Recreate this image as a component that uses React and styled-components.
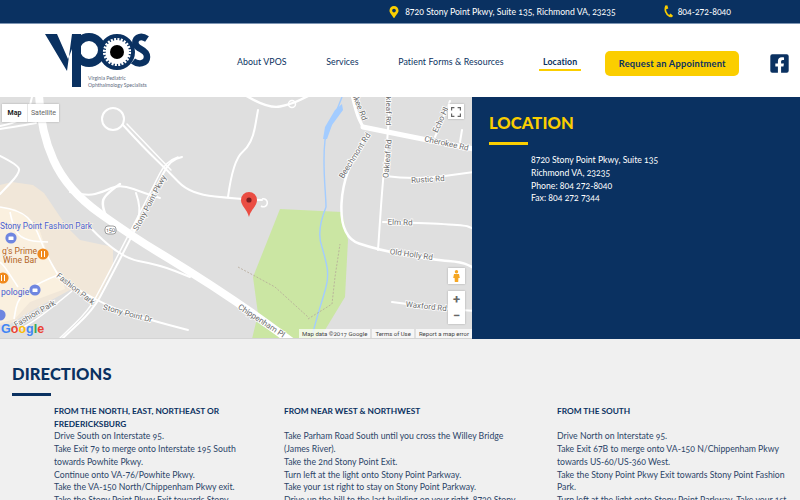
import React from "react";
import styled, { createGlobalStyle } from "styled-components";
import { FaFacebookSquare, FaMapMarkerAlt } from "react-icons/fa";

const NAVY = "#0a3161";
const YELLOW = "#fbce00";
const FONT = `Lato, "Open Sans", "Liberation Sans", sans-serif`;

const GlobalStyle = createGlobalStyle`
  html, body {
    height: 500px;
    margin: 0;
    overflow: hidden;
  }

  body {
    background: #f0f0f0;
    font-family: ${FONT};
    font-variant-numeric: oldstyle-nums;
  }
`;

const Page = styled.div`
  height: 500px;
  overflow: hidden;
  width: 800px;
`;

const TopBar = styled.div`
  align-items: center;
  background: ${NAVY};
  border-bottom: 1px solid #7d95b3;
  color: #fff;
  display: flex;
  font-size: 8.7px;
  height: 23px;
  justify-content: flex-end;
  padding-right: 69px;
`;

const TopItem = styled.span`
  align-items: center;
  display: flex;
  gap: ${(p) => p.$gap}px;
  margin-left: ${(p) => p.$offset || 0}px;
`;

const Header = styled.header`
  align-items: center;
  background: #fff;
  display: flex;
  height: 73px;
  padding-left: 44px;
`;

const LogoSvg = styled.svg`
  flex: none;
  height: 60px;
  margin-right: 85px;
  width: 108px;
`;

const HeaderActions = styled.div`
  align-items: center;
  display: flex;
  flex: none;
  margin-top: 6px;
`;

const Nav = styled.nav`
  align-items: center;
  display: flex;
  flex: none;
  gap: 39.5px;
`;

const NavLink = styled.a`
  border-bottom: 2px solid ${(p) => (p.$active ? YELLOW : "transparent")};
  color: ${NAVY};
  flex: none;
  font-size: 8.8px;
  font-weight: ${(p) => (p.$active ? 700 : 400)};
  letter-spacing: 0.08px;
  margin: ${(p) => (p.$active ? "0 -4px" : "0")};
  padding: 0 ${(p) => (p.$active ? "4px" : "0")} 2px;
  white-space: nowrap;
`;

const AppointmentButton = styled.button`
  background: ${YELLOW};
  border: 0;
  border-radius: 5px;
  color: ${NAVY};
  flex: none;
  font-family: ${FONT};
  font-size: 9.3px;
  font-weight: 700;
  height: 25px;
  letter-spacing: 0.2px;
  margin-left: 28px;
  padding: 0;
  width: 134px;
`;

const FacebookLink = styled.a`
  color: ${NAVY};
  display: flex;
  flex: none;
  font-size: 21px;
  margin-left: 30px;
`;

const Hero = styled.section`
  display: flex;
  height: 242px;
`;

const MapFrame = styled.div`
  background: #dfdfdf;
  border-bottom: 1px solid #d4d4d4;
  box-sizing: border-box;
  flex: none;
  height: 242px;
  overflow: hidden;
  position: relative;
  width: 472px;
`;

const MapTypes = styled.div`
  background: #fff;
  box-shadow: 0 0 2px rgba(0, 0, 0, 0.25);
  display: flex;
  left: 2px;
  position: absolute;
  top: 7px;
`;

const MapType = styled.span`
  align-items: center;
  border-left: ${(p) => (p.$active ? "0" : "1px solid #e6e6e6")};
  color: ${(p) => (p.$active ? "#222" : "#666")};
  display: flex;
  font-family: Roboto, sans-serif;
  font-size: 7px;
  font-weight: ${(p) => (p.$active ? 700 : 400)};
  height: 18px;
  justify-content: center;
  width: ${(p) => p.$width}px;
`;

const MapButton = styled.div`
  align-items: center;
  background: #fff;
  box-shadow: 0 0 2px rgba(0, 0, 0, 0.25);
  display: flex;
  height: ${(p) => p.$height}px;
  justify-content: center;
  left: 448px;
  position: absolute;
  top: ${(p) => p.$top}px;
  width: ${(p) => p.$width || 16}px;
`;

const ZoomControl = styled.div`
  background: #fff;
  box-shadow: 0 0 2px rgba(0, 0, 0, 0.25);
  display: grid;
  grid-template-rows: 1fr 1fr;
  height: 33px;
  left: 448px;
  position: absolute;
  top: 194px;
  width: 17px;
`;

const ZoomButton = styled.span`
  align-items: center;
  color: #666;
  display: flex;
  font-family: Roboto, sans-serif;
  font-size: 13px;
  font-weight: 700;
  justify-content: center;
  line-height: 1;
`;

const Attribution = styled.div`
  bottom: 0;
  color: #444;
  display: flex;
  font-family: Roboto, sans-serif;
  font-size: 6px;
  gap: 2px;
  height: 9px;
  position: absolute;
  right: 0;
`;

const AttributionItem = styled.span`
  background: rgba(255, 255, 255, 0.7);
  line-height: 9px;
  padding: 0 3px;
`;

const LocationPanel = styled.div`
  background: ${NAVY};
  color: #fff;
  flex: 1;
  padding: 15px 17px;
`;

const SectionTitle = styled.h2`
  color: ${(p) => p.$color};
  font-size: 16.5px;
  font-weight: 900;
  letter-spacing: 0.1px;
  line-height: 22px;
  margin: 0;

  &::after {
    background: ${(p) => p.$color};
    content: "";
    display: block;
    height: 3px;
    margin-top: 8px;
    width: 39px;
  }
`;

const AddressBlock = styled.div`
  font-size: 8.7px;
  line-height: 12.8px;
  margin: 9px 0 0 42px;
`;

const Directions = styled.section`
  background: #f0f0f0;
  padding: 24px 0 0 12px;
`;

const Columns = styled.div`
  color: #2c4568;
  display: grid;
  font-size: 8.7px;
  grid-template-columns: 230px 273px 1fr;
  line-height: 12.7px;
  margin: 9px 0 0 42px;
`;

const ColumnTitle = styled.div`
  color: ${NAVY};
  font-size: 8.3px;
  font-weight: 700;
  min-height: 25.4px;
`;

const Line = styled.div`
  white-space: nowrap;
`;

const roads = [
  [8, [[39, -4], [40, 33], [67, 93], [133, 140], [183, 170], [240, 207], [292, 245]]],
  [2, [[182, 60], [170, 62], [157, 90], [133, 137], [107, 187], [93, 213], [63, 241]]],
  [1.5, [[178, 60], [166, 64], [153, 90], [129, 137], [103, 187], [89, 213], [60, 241]]],
  [2, [[123, 28], [143, 50], [167, 73], [190, 97], [240, 102], [262, 103]]],
  [1.5, [[127, 27], [147, 48], [171, 73]]],
  [2, [[228, 100], [233, 63], [252, 47], [258, 13]]],
  [2.5, [[245, -2], [268, 12], [292, 7], [310, -2]]],
  [2, [[70, 95], [87, 99], [103, 95], [120, 87], [147, 97], [160, 101]]],
  [2.5, [[120, 87], [104, 98], [102, 110], [110, 127], [122, 133]]],
  [2, [[136, 96], [142, 113], [133, 133]]],
  [2, [[87, 127], [117, 160], [160, 168], [190, 180]]],
  [2, [[58, 180], [100, 207], [150, 223], [188, 233]]],
  [2, [[0, 59], [18, 68], [20, 76], [0, 97]]],
  [2, [[0, 32], [25, 28], [36, 26]]],
  [2, [[0, 29], [26, 24], [32, 0]]],
  [3, [[352, -2], [356, 16], [363, 30]]],
  [5, [[363, 30], [422, 42], [474, 52]]],
  [2.5, [[367, 38], [343, 73], [340, 140], [378, 153], [435, 163], [462, 165], [474, 171]]],
  [2, [[390, -2], [388, 40], [383, 80], [378, 153]]],
  [2, [[385, 79], [415, 83], [474, 75]]],
  [2, [[383, 125], [462, 127], [474, 132]]],
  [2, [[392, 205], [448, 212], [474, 214]]],
  [2, [[450, 4], [435, 40]]],
  [2, [[462, 33], [460, 45]]]
];

const mallRoads = [
  [[0, 110], [20, 113], [35, 128], [45, 155], [58, 178]],
  [[58, 178], [40, 185], [18, 200], [14, 222]],
  [[10, 115], [14, 135], [28, 144], [48, 145]],
  [[18, 190], [5, 170], [0, 165]],
  [[72, 194], [35, 225], [12, 235]]
];

// rounds a list of points into one path, good enough for map roads
const smooth = (points) => {
  let d = `M${points[0][0]} ${points[0][1]}`;
  for (let i = 1; i < points.length - 1; i++) {
    const midX = (points[i][0] + points[i + 1][0]) / 2;
    const midY = (points[i][1] + points[i + 1][1]) / 2;
    d += ` Q${points[i][0]} ${points[i][1]} ${midX} ${midY}`;
  }
  const last = points[points.length - 1];
  return `${d} L${last[0]} ${last[1]}`;
};

const MapLabel = styled.text`
  fill: ${(p) => p.$color || "#6d6d6d"};
  font-family: Roboto, sans-serif;
  font-size: ${(p) => p.$size || 8}px;
  paint-order: stroke;
  stroke: ${(p) => p.$halo || "#fff"};
  stroke-width: 1.5px;
`;

const roadLabels = [
  ["Stony Point Pkwy", 152, 107, -62],
  ["Fashion Park", 74, 194, 38],
  ["Fashion Park", 36, 219, -30],
  ["Stony Point Dr", 127, 219, 15],
  ["Chippenham Pl", 260, 226, 33],
  ["Beechmont Rd", 357, 60, -58],
  ["Cherokee Rd", 446, 49, 12],
  ["Cherokee Rd", 354, 3, 68],
  ["Oakleaf Rd", 390, 62, -85],
  ["Oakleaf Rd", 386, 9, 90],
  ["Rustic Rd", 428, 85, -3],
  ["Elm Rd", 400, 128, 2],
  ["Old Holly Rd", 411, 160, 8],
  ["Waxford Rd", 426, 212, 6],
  ["Echo Hl", 443, 24, -65]
];

const Poi = ({ x, y, color, children }) => (
  <g>
    <circle cx={x} cy={y} r="5.6" fill={color} />
    {children}
  </g>
);

const MapDrawing = () => (
  <svg width="472" height="242" viewBox="0 0 472 242" style={{ display: "block" }}>
    <polygon
      fill="#f1e7d9"
      points="0,88 12,85 33,88 44,96 67,130 80,143 113,150 113,170 97,203 70,193 33,213 10,227 0,228"
    />
    <polygon fill="#faf0df" points="0,110 15,112 38,128 50,165 62,180 65,192 30,205 15,222 0,226" />
    <polygon
      fill="#cbe6a3"
      points="280,112 342,115 348,143 345,200 325,233 315,242 252,242 258,217 253,180"
    />
    {mallRoads.map((points, i) => (
      <path key={i} d={smooth(points)} fill="none" stroke="#fff" strokeWidth="1.6" />
    ))}
    {roads.map(([width, points], i) => (
      <path
        key={i}
        d={smooth(points)}
        fill="none"
        stroke="#fff"
        strokeWidth={width}
        strokeLinecap="round"
      />
    ))}
    <circle cx="113" cy="22" r="11" fill="none" stroke="#fff" strokeWidth="2" />
    <circle cx="292" cy="7" r="3.5" fill="none" stroke="#fff" strokeWidth="1.5" />
    <path d="M262 102 a4 4 0 1 1 -1 7" fill="none" stroke="#fff" strokeWidth="1.6" />
    <path
      d="M342 0 L325 43 C322 70 326 95 326 110 C320 125 318 140 322 150 C326 165 330 175 326 190 C322 205 316 222 313 236"
      fill="none"
      stroke="#a3ccff"
      strokeWidth="1.4"
    />
    <polygon fill="#a3ccff" points="342,7 343,13 332,28 327,42 323,42 325,30 335,13" />
    <path
      d="M238 170 L253 178 L275 190 L308 220 M308 222 L332 207 L335 180 L340 147"
      fill="none"
      stroke="#b5a898"
      strokeWidth="0.8"
      strokeDasharray="2 1.5"
    />
    {roadLabels.map(([label, x, y, angle], i) => (
      <MapLabel key={i} textAnchor="middle" transform={`translate(${x} ${y}) rotate(${angle})`}>
        {label}
      </MapLabel>
    ))}
    <rect x="105" y="129" width="11" height="8" rx="3" fill="#fff" stroke="#777" strokeWidth="0.7" />
    <text x="110.5" y="135" textAnchor="middle" fontFamily="Roboto, sans-serif" fontSize="5.5" fill="#555">
      150
    </text>
    <MapLabel x="0" y="132" $color="#4a5fd0" $size={8.3} $halo="#f8f0e3">
      Stony Point Fashion Park
    </MapLabel>
    <MapLabel x="2" y="157" $color="#b5651d" $size={8.6} $halo="#f8f0e3">
      g's Prime
    </MapLabel>
    <MapLabel x="3" y="166" $color="#b5651d" $size={8.6} $halo="#f8f0e3">
      Wine Bar
    </MapLabel>
    <MapLabel x="1" y="198" $color="#4a5fd0" $size={8.6} $halo="#f8f0e3">
      pologie
    </MapLabel>
    <Poi x={11} y={141} color="#6f86e0">
      <rect x="8.5" y="139.5" width="5" height="3.6" rx="0.6" fill="#fff" />
    </Poi>
    <Poi x={43} y={157} color="#f08a1d">
      <path d="M41.5 154 v6 M44.5 154 v6" stroke="#fff" strokeWidth="1" />
    </Poi>
    <Poi x={3} y={181} color="#f08a1d">
      <path d="M1.5 178 v6 M4.5 178 v6" stroke="#fff" strokeWidth="1" />
    </Poi>
    <Poi x={35} y={193} color="#6f86e0">
      <rect x="32.5" y="191.5" width="5" height="3.6" rx="0.6" fill="#fff" />
    </Poi>
    <Poi x={0} y={218} color="#6f86e0" />
    <path
      d="M249 120 C247 112 241 109 241 103 a8 8 0 0 1 16 0 C257 109 251 112 249 120 Z"
      fill="#ea4d43"
    />
    <circle cx="249" cy="103" r="2.6" fill="#7c1e20" />
    <text x="1" y="236" fontFamily="'Liberation Sans', sans-serif" fontSize="12.5" fontWeight="700">
      <tspan fill="#4285f4">G</tspan>
      <tspan fill="#ea4335">o</tspan>
      <tspan fill="#fbbc05">o</tspan>
      <tspan fill="#4285f4">g</tspan>
      <tspan fill="#34a853">l</tspan>
      <tspan fill="#ea4335">e</tspan>
    </text>
  </svg>
);

const FullscreenIcon = () => (
  <svg width="10" height="10" viewBox="0 0 10 10" fill="none" stroke="#666" strokeWidth="1.2">
    <path d="M0.6 3.4 V0.6 H3.4 M6.6 0.6 H9.4 V3.4 M9.4 6.6 V9.4 H6.6 M3.4 9.4 H0.6 V6.6" />
  </svg>
);

const PegmanIcon = () => (
  <svg width="7" height="12" viewBox="0 0 7 12" fill="#f5a623">
    <circle cx="3.5" cy="1.8" r="1.7" />
    <path d="M1 4 H6 L6.8 8 H5.4 L5.2 12 H1.8 L1.6 8 H0.2 Z" />
  </svg>
);

const PhoneIcon = () => (
  <svg width="10" height="13" viewBox="0 0 10 13">
    <path d="M2 1 C0.5 4.5 1.5 9.5 6 11.5" fill="none" stroke={YELLOW} strokeWidth="1.7" />
    <path d="M0.9 0.8 L3.3 0.2 L4.3 3.4 L2 4.2 Z M4.6 10.4 L6.6 8.6 L9.2 11 L7 12.6 Z" fill={YELLOW} />
  </svg>
);

const Logo = () => (
  <LogoSvg viewBox="44 32 108 60">
    <polygon points="45,35 57,35 68,60 72,50 72,88 81,88 81,35 72,35 67,72" fill={NAVY} />
    <circle cx="89" cy="51" r="13" fill="none" stroke={NAVY} strokeWidth="8" />
    <circle cx="117" cy="53" r="15" fill="none" stroke={NAVY} strokeWidth="6" />
    <circle cx="117" cy="53" r="11" fill="#fff" />
    <circle cx="117" cy="53" r="12.6" fill="none" stroke="#fff" strokeWidth="3" strokeDasharray="2 1.3" />
    <circle cx="117" cy="53" r="7" fill="#000" />
    <path
      d="M147 40 C140 35 133 40 136 46 C138 51 147 50 147 58 C147 65 138 66 133 62"
      fill="none"
      stroke={NAVY}
      strokeWidth="6.5"
    />
    <text x="88" y="81" fontFamily={FONT} fontSize="5.1" fill="#5d6b80">
      Virginia Pediatric
    </text>
    <text x="88" y="88" fontFamily={FONT} fontSize="5.1" fill="#5d6b80">
      Ophthalmology Specialists
    </text>
  </LogoSvg>
);

const columns = [
  {
    title: ["FROM THE NORTH, EAST, NORTHEAST OR", "FREDERICKSBURG"],
    lines: [
      "Drive South on Interstate 95.",
      "Take Exit 79 to merge onto Interstate 195 South",
      "towards Powhite Pkwy.",
      "Continue onto VA-76/Powhite Pkwy.",
      "Take the VA-150 North/Chippenham Pkwy exit.",
      "Take the Stony Point Pkwy Exit towards Stony"
    ]
  },
  {
    title: ["FROM NEAR WEST & NORTHWEST"],
    lines: [
      "Take Parham Road South until you cross the Willey Bridge",
      "(James River).",
      "Take the 2nd Stony Point Exit.",
      "Turn left at the light onto Stony Point Parkway.",
      "Take your 1st right to stay on Stony Point Parkway.",
      "Drive up the hill to the last building on your right, 8720 Stony"
    ]
  },
  {
    title: ["FROM THE SOUTH"],
    lines: [
      "Drive North on Interstate 95.",
      "Take Exit 67B to merge onto VA-150 N/Chippenham Pkwy",
      "towards US-60/US-360 West.",
      "Take the Stony Point Pkwy Exit towards Stony Point Fashion",
      "Park.",
      "Turn left at the light onto Stony Point Parkway. Take your 1st"
    ]
  }
];

const App = () => (
  <Page>
    <GlobalStyle />
    <TopBar>
      <TopItem $gap={5}>
        <FaMapMarkerAlt color={YELLOW} size={12} />
        8720 Stony Point Pkwy, Suite 135, Richmond VA, 23235
      </TopItem>
      <TopItem $gap={4} $offset={48}>
        <PhoneIcon />
        804-272-8040
      </TopItem>
    </TopBar>
    <Header>
      <Logo />
      <HeaderActions>
        <Nav>
          <NavLink>About VPOS</NavLink>
          <NavLink>Services</NavLink>
          <NavLink>Patient Forms &amp; Resources</NavLink>
          <NavLink $active>Location</NavLink>
        </Nav>
        <AppointmentButton>Request an Appointment</AppointmentButton>
        <FacebookLink>
          <FaFacebookSquare />
        </FacebookLink>
      </HeaderActions>
    </Header>
    <Hero>
      <MapFrame>
        <MapDrawing />
        <MapTypes>
          <MapType $active $width={25}>Map</MapType>
          <MapType $width={31}>Satellite</MapType>
        </MapTypes>
        <MapButton $top={7} $height={15}>
          <FullscreenIcon />
        </MapButton>
        <MapButton $top={171} $height={16} $width={17}>
          <PegmanIcon />
        </MapButton>
        <ZoomControl>
          <ZoomButton>+</ZoomButton>
          <ZoomButton>−</ZoomButton>
        </ZoomControl>
        <Attribution>
          <AttributionItem>Map data ©2017 Google</AttributionItem>
          <AttributionItem>Terms of Use</AttributionItem>
          <AttributionItem>Report a map error</AttributionItem>
        </Attribution>
      </MapFrame>
      <LocationPanel>
        <SectionTitle $color={YELLOW}>LOCATION</SectionTitle>
        <AddressBlock>
          <Line>8720 Stony Point Pkwy, Suite 135</Line>
          <Line>Richmond VA, 23235</Line>
          <Line>Phone: 804 272-8040</Line>
          <Line>Fax: 804 272 7344</Line>
        </AddressBlock>
      </LocationPanel>
    </Hero>
    <Directions>
      <SectionTitle $color={NAVY}>DIRECTIONS</SectionTitle>
      <Columns>
        {columns.map((column) => (
          <div key={column.title[0]}>
            <ColumnTitle>
              {column.title.map((line) => (
                <Line key={line}>{line}</Line>
              ))}
            </ColumnTitle>
            {column.lines.map((line) => (
              <Line key={line}>{line}</Line>
            ))}
          </div>
        ))}
      </Columns>
    </Directions>
  </Page>
);

export default App;
